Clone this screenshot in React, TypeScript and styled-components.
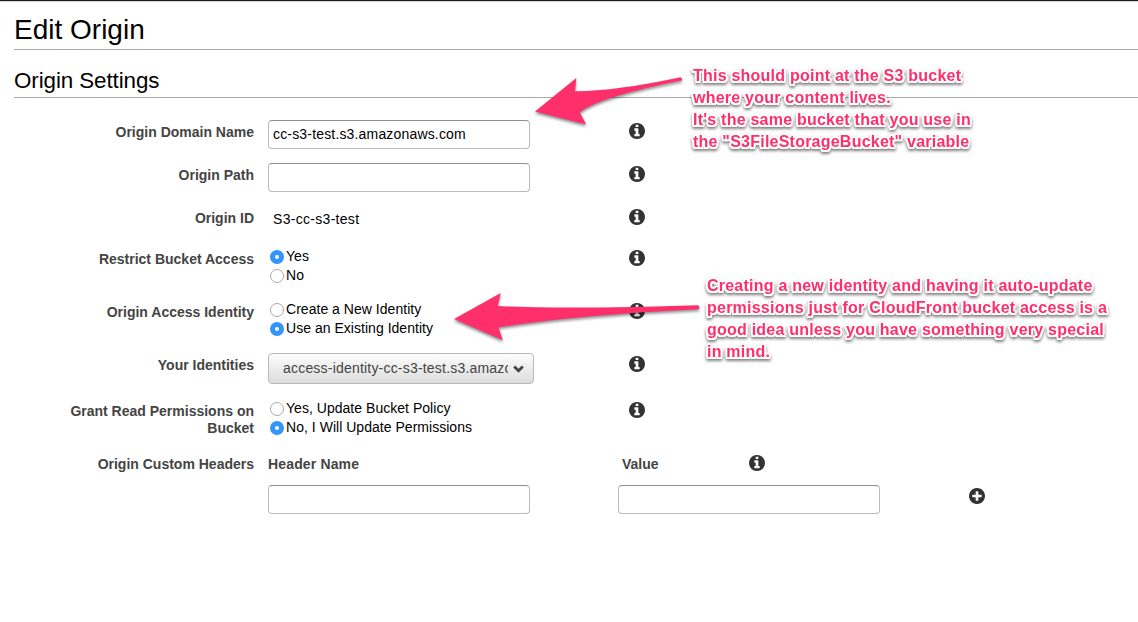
import React from 'react';
import styled, { createGlobalStyle } from 'styled-components';

const GlobalStyle = createGlobalStyle`
  * { box-sizing: border-box; }
  body {
    margin: 0;
    background: #fff;
    color: #000;
    font-family: "Liberation Sans", Arial, sans-serif;
    font-size: 14px;
    overflow: hidden;
  }
`;

const Page = styled.main`
  position: relative;
  height: 622px;
  border-top: 1px solid #231f20;
  box-shadow: inset 0 1px 0 #d5d5d5;
  padding-left: 14px;
`;

const Title = styled.h1`
  margin: 0;
  height: 49px;
  padding-top: 13px;
  border-bottom: 1px solid #aaa;
  font-size: 28px;
  font-weight: 400;
  line-height: 32px;
`;

const Subtitle = styled.h2`
  margin: 0;
  height: 48px;
  padding-top: 17px;
  border-bottom: 1px solid #aaa;
  font-size: 22.4px;
  font-weight: 400;
  line-height: 27px;
  letter-spacing: -0.1px;
`;

const Form = styled.form`
  padding-top: 22px;
`;

const Row = styled.div<{ $height: number }>`
  display: grid;
  grid-template-columns: 240px 350px 1fr;
  column-gap: 14px;
  align-items: start;
  height: ${(p) => p.$height}px;
`;

const Label = styled.div`
  padding: 4px 0 0 50px;
  color: #444;
  font-weight: 700;
  line-height: 17px;
  text-align: right;
`;

const Input = styled.input`
  display: block;
  width: 262px;
  height: 29px;
  padding: 0 4px 2px;
  border: 1px solid #bbb;
  border-top-color: #8e8e8e;
  border-radius: 4px;
  background: #fff;
  color: #000;
  font: 14px "Liberation Sans", Arial, sans-serif;
  letter-spacing: 0.17px;
  outline: none;
`;

const StaticValue = styled.div`
  padding: 5px 5px 0;
  line-height: 17px;
  letter-spacing: 0.3px;
`;

const InfoCell = styled.div`
  display: flex;
  padding-top: 3px;
  margin-left: -3px;
`;

const Option = styled.label`
  display: flex;
  align-items: center;
  height: 19px;
  padding-left: 2px;
  line-height: 17px;
  white-space: nowrap;
`;

const OptionText = styled.span`
  letter-spacing: 0.03px;
`;

const Dot = styled.span<{ $on?: boolean }>`
  width: 14px;
  height: 14px;
  margin: 1px 2px 0 0;
  border-radius: 50%;
  border: ${(p) => (p.$on ? '5px solid #3394fb' : '1px solid #aaa')};
  background: #fff;
`;

const Select = styled.div`
  display: flex;
  align-items: center;
  width: 266px;
  height: 31px;
  padding: 0 9px 0 14px;
  border: 1px solid #b8b8b8;
  border-radius: 4px;
  background: linear-gradient(#fdfdfd, #dcdcdc);
  color: #444;
`;

const SelectText = styled.span`
  width: 225px;
  margin-right: 5px;
  padding-bottom: 1px;
  overflow: hidden;
  white-space: nowrap;
  letter-spacing: 0.2px;
`;

const HeaderCols = styled.div`
  display: grid;
  grid-template-columns: 350px 262px 1fr;
`;

const HeaderTitle = styled.div`
  display: flex;
  height: 33px;
  padding-top: 4px;
  color: #444;
  font-weight: 700;
  line-height: 17px;
  letter-spacing: 0.15px;
`;

const ValueTitle = styled(HeaderTitle)`
  padding-left: 4px;
  letter-spacing: 0;
`;

const ValueIcon = styled.span`
  display: flex;
  margin: -1px 0 0 90px;
`;

const AddCell = styled.div`
  padding: 36px 0 0 89px;
`;

const Arrows = styled.svg`
  position: absolute;
  left: 0;
  top: -1px;
  pointer-events: none;
  filter: drop-shadow(0 2px 1.5px rgba(0, 0, 0, 0.45));
`;

const Note = styled.p<{ $x: number; $y: number }>`
  position: absolute;
  left: ${(p) => p.$x}px;
  top: ${(p) => p.$y}px;
  margin: 0;
  color: #ff2f6b;
  font-size: 16px;
  font-weight: 700;
  line-height: 22px;
  letter-spacing: 0.23px;
  white-space: pre;
  text-shadow: 2px 0 #fff, -2px 0 #fff, 0 2px #fff, 0 -2px #fff,
    1.5px 1.5px #fff, -1.5px 1.5px #fff, 1.5px -1.5px #fff, -1.5px -1.5px #fff;
  filter: drop-shadow(0 2px 1.5px rgba(0, 0, 0, 0.5));
`;

const Glyph = styled.svg`
  display: block;
  width: 16px;
  height: 16px;
  margin-top: 0.4px;
  fill: #333;
`;

const DISC =
  'q0 209-103 385.5t-279.500 279.500-385.500 103-385.500-103-279.500-279.500-103-385.500 103-385.500 279.500-279.500 385.500-103 385.500 103 279.500 279.500 103 385.500z';

const InfoIcon = () => (
  <Glyph viewBox="128 128 1536 1536">
    <path
      d={
        'M1152 1376v-160q0-14-9-23t-23-9h-96v-512q0-14-9-23t-23-9h-320q-14 0-23 9t-9 23v160q0 14 9 23t23 9h96v320h-96q-14 0-23 9t-9 23v160q0 14 9 23t23 9h448q14 0 23-9t9-23zm-128-896v-160q0-14-9-23t-23-9h-192q-14 0-23 9t-9 23v160q0 14 9 23t23 9h192q14 0 23-9t9-23zm640 416' +
        DISC
      }
    />
  </Glyph>
);

const AddIcon = () => (
  <Glyph viewBox="128 128 1536 1536">
    <path
      d={
        'M1344 960v-128q0-26-19-45t-45-19h-256v-256q0-26-19-45t-45-19h-128q-26 0-45 19t-19 45v256h-256q-26 0-45 19t-19 45v128q0 26 19 45t45 19h256v256q0 26 19 45t45 19h128q26 0 45-19t19-45v-256h256q26 0 45-19t19-45zm320-64' +
        DISC
      }
    />
  </Glyph>
);

const Choice = ({ on, children }: { on?: boolean; children: React.ReactNode }) => (
  <Option>
    <Dot $on={on} />
    <OptionText>{children}</OptionText>
  </Option>
);

const Field = ({ label, height, children }: { label: string; height: number; children: React.ReactNode }) => (
  <Row $height={height}>
    <Label>{label}</Label>
    <div>{children}</div>
    <InfoCell>
      <InfoIcon />
    </InfoCell>
  </Row>
);

export default function App() {
  return (
    <Page>
      <GlobalStyle />
      <Title>Edit Origin</Title>
      <Subtitle>Origin Settings</Subtitle>
      <Form>
        <Field label="Origin Domain Name" height={43}>
          <Input defaultValue="cc-s3-test.s3.amazonaws.com" />
        </Field>
        <Field label="Origin Path" height={43}>
          <Input />
        </Field>
        <Field label="Origin ID" height={41}>
          <StaticValue>S3-cc-s3-test</StaticValue>
        </Field>
        <Field label="Restrict Bucket Access" height={53}>
          <Choice on>Yes</Choice>
          <Choice>No</Choice>
        </Field>
        <Field label="Origin Access Identity" height={53}>
          <Choice>Create a New Identity</Choice>
          <Choice on>Use an Existing Identity</Choice>
        </Field>
        <Field label="Your Identities" height={46}>
          <Select>
            <SelectText>access-identity-cc-s3-test.s3.amazo</SelectText>
            <svg width="11" height="8" viewBox="0 0 11 8">
              <path d="M1.2 1.5 5.5 5.7 9.8 1.5" fill="none" stroke="#444" strokeWidth="2.8" />
            </svg>
          </Select>
        </Field>
        <Field label="Grant Read Permissions on Bucket" height={53}>
          <Choice>Yes, Update Bucket Policy</Choice>
          <Choice on>No, I Will Update Permissions</Choice>
        </Field>
        <Row $height={62}>
          <Label>Origin Custom Headers</Label>
          <HeaderCols>
            <div>
              <HeaderTitle>Header Name</HeaderTitle>
              <Input />
            </div>
            <div>
              <ValueTitle>
                Value
                <ValueIcon>
                  <InfoIcon />
                </ValueIcon>
              </ValueTitle>
              <Input />
            </div>
            <AddCell>
              <AddIcon />
            </AddCell>
          </HeaderCols>
        </Row>
      </Form>
      <Arrows width="1138" height="622" viewBox="0 0 1138 622" fill="#ff2f6b">
        <path d="M535 111.500 576.300 78 575 91.300Q617 91 680.500 77.300Q683 78.500 681.700 80.600Q600 96.500 579.800 112.300L586.200 124.500Z" />
        <path d="M454 319 500.700 293 497.800 306Q570 309.500 698 305.300Q700.500 307.300 698.500 309.200Q580 314.500 498.500 327.300L502.800 340.300Z" />
      </Arrows>
      <Note $x={693} $y={64}>
        {'This should point at the S3 bucket\nwhere your content lives.\nIt\'s the same bucket that you use in\nthe "S3FileStorageBucket" variable'}
      </Note>
      <Note $x={707} $y={274}>
        {'Creating a new identity and having it auto-update\npermissions just for CloudFront bucket access is a\ngood idea unless you have something very special\nin mind.'}
      </Note>
    </Page>
  );
}
